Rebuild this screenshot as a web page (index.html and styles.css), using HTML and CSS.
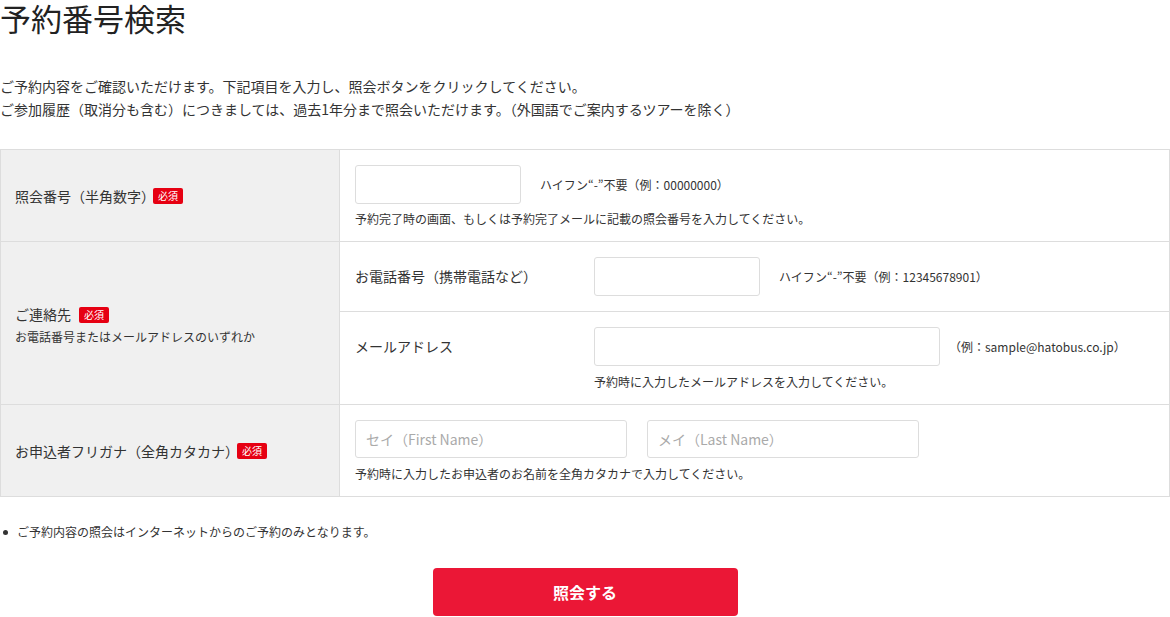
FILE: index.html
```html
<!DOCTYPE html>
<html lang="ja">
<head>
    <meta charset="UTF-8">
    <title>予約番号検索</title>
    <link rel="stylesheet" href="styles.css">
</head>
<body>
    <div class="container">
        <h1>予約番号検索</h1>
        <p class="lead">
            ご予約内容をご確認いただけます。下記項目を入力し、照会ボタンをクリックしてください。<br>
            ご参加履歴（取消分も含む）につきましては、過去1年分まで照会いただけます。（外国語でご案内するツアーを除く）
        </p>

        <form id="formulario" class="form-table">
            <div class="row">
                <div class="head">
                    <span class="label paren">照会番号（半角数字）</span><span class="badge">必須</span>
                </div>
                <div class="body">
                    <div class="line">
                        <input type="text" class="input-s" name="bango">
                        <span class="note">ハイフン“-”不要（例：00000000）</span>
                    </div>
                    <p class="hint">予約完了時の画面、もしくは予約完了メールに記載の照会番号を入力してください。</p>
                </div>
            </div>

            <div class="row">
                <div class="head">
                    <div>
                        <span class="label">ご連絡先</span><span class="badge">必須</span>
                        <p class="sub">お電話番号またはメールアドレスのいずれか</p>
                    </div>
                </div>
                <div class="body nested">
                    <div class="subrow">
                        <span class="sublabel">お電話番号（携帯電話など）</span>
                        <div class="subfield">
                            <div class="line">
                                <input type="text" class="input-s" name="tel">
                                <span class="note">ハイフン“-”不要（例：12345678901）</span>
                            </div>
                        </div>
                    </div>
                    <div class="subrow">
                        <span class="sublabel">メールアドレス</span>
                        <div class="subfield">
                            <div class="line">
                                <input type="text" class="input-l" name="mail">
                                <span class="note note-mail">（例：sample@hatobus.co.jp）</span>
                            </div>
                            <p class="hint hint-wide">予約時に入力したメールアドレスを入力してください。</p>
                        </div>
                    </div>
                </div>
            </div>

            <div class="row">
                <div class="head">
                    <span class="label paren">お申込者フリガナ（全角カタカナ）</span><span class="badge">必須</span>
                </div>
                <div class="body">
                    <div class="line names">
                        <input type="text" class="input-m" name="sei" placeholder="セイ（First Name）">
                        <input type="text" class="input-m" name="mei" placeholder="メイ（Last Name）">
                    </div>
                    <p class="hint hint-wide">予約時に入力したお申込者のお名前を全角カタカナで入力してください。</p>
                </div>
            </div>
        </form>

        <ul class="notes">
            <li>ご予約内容の照会はインターネットからのご予約のみとなります。</li>
        </ul>

        <div class="actions">
            <button type="submit" form="formulario">照会する</button>
        </div>
    </div>
</body>
</html>
```

FILE: styles.css
```css
body {
    font-family: "Noto Sans CJK JP", "Noto Sans", sans-serif;
    color: #333;
    background-color: #fff;
    margin: 0;
}

.container {
    width: 1170px;
}

h1 {
    font-size: 31px;
    font-weight: normal;
    line-height: 36px;
    color: #222;
    margin: 0;
}

.lead {
    font-size: 14px;
    line-height: 23px;
    margin: 39px 0 28px;
}

.form-table {
    border: 1px solid #ddd;
    border-bottom: none;
}

.row {
    display: grid;
    grid-template-columns: 339px 1fr;
    border-bottom: 1px solid #ddd;
}

.head {
    background-color: #f0f0f0;
    border-right: 1px solid #ddd;
    padding: 0 14px;
    display: flex;
    align-items: center;
}

.label {
    font-size: 14px;
}

/* the closing bracket keeps its blank half, pull the badge back */
.label.paren {
    margin-right: -10px;
}

.badge {
    display: inline-block;
    background-color: #e60012;
    color: #fff;
    font-size: 10px;
    line-height: 16px;
    padding: 0 5px;
    border-radius: 2px;
    margin-left: 8px;
    vertical-align: 1px;
}

.sub {
    font-size: 12px;
    margin: 3px 0 0;
}

.body {
    padding: 15px 15px 13px;
}

.body.nested {
    padding: 0;
}

.line {
    display: flex;
    align-items: center;
}

.names {
    gap: 20px;
}

input[type="text"] {
    height: 39px;
    border: 1px solid #ddd;
    border-radius: 3px;
    box-sizing: border-box;
    padding: 0 10px;
    font-family: inherit;
    font-size: 14px;
    color: #333;
    margin: 0;
}

input::placeholder {
    color: #aaa;
}

.input-s {
    width: 166px;
}

.input-m {
    width: 272px;
    height: 38px !important;
}

.input-l {
    width: 346px;
}

.note {
    font-size: 12px;
    margin-left: 19px;
}

.note-mail {
    margin-left: 9px;
}

.hint {
    font-size: 12px;
    line-height: 18px;
    margin: 6px 0 0;
}

.hint-wide {
    margin-top: 7px;
}

.subrow {
    display: flex;
    align-items: flex-start;
    padding: 15px 15px;
    border-bottom: 1px solid #ddd;
}

.subrow:last-child {
    padding-bottom: 13px;
    border-bottom: none;
}

.sublabel {
    width: 239px;
    font-size: 14px;
    line-height: 39px;
}

.notes {
    list-style: none;
    margin: 26px 0 0;
    padding: 0;
    font-size: 12px;
    line-height: 18px;
}

.notes li {
    display: flex;
    align-items: center;
}

.notes li::before {
    content: "";
    width: 5px;
    height: 5px;
    border-radius: 50%;
    background-color: #333;
    margin: 0 9px 0 3px;
}

.actions {
    display: flex;
    justify-content: center;
    margin-top: 27px;
}

button {
    width: 305px;
    height: 48px;
    background-color: #eb1736;
    color: #fff;
    border: none;
    border-radius: 4px;
    font-family: inherit;
    font-size: 16px;
    font-weight: bold;
    cursor: pointer;
}
```
